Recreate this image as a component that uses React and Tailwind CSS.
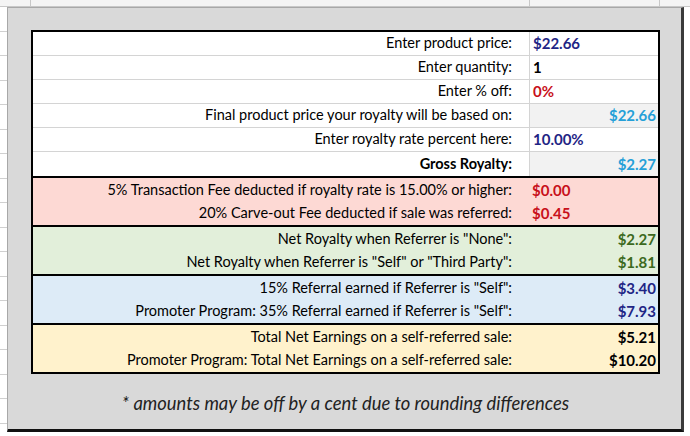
import React from 'react';

const navy = 'text-[#1f2585] font-bold';
const red = 'text-[#c8101a] font-bold';
const sky = 'text-[#25a0d8] font-bold';
const green = 'text-[#3c6a1e] font-bold';
const black = 'text-black font-bold';

const topRows = [
    { label: 'Enter product price:', value: '$22.66', tone: navy },
    { label: 'Enter quantity:', value: '1', tone: black },
    { label: 'Enter % off:', value: '0%', tone: red },
    { label: 'Final product price your royalty will be based on:', value: '$22.66', tone: sky, right: true, shade: true },
    { label: 'Enter royalty rate percent here:', value: '10.00%', tone: navy },
    { label: 'Gross Royalty:', value: '$2.27', tone: sky, right: true, shade: true, bold: true },
];

const sections = [
    {
        bg: 'bg-[#fdd9d4]',
        rows: [
            { label: '5% Transaction Fee deducted if royalty rate is 15.00% or higher:', value: '$0.00', tone: red },
            { label: '20% Carve-out Fee deducted if sale was referred:', value: '$0.45', tone: red },
        ],
    },
    {
        bg: 'bg-[#e2efda]',
        rows: [
            { label: 'Net Royalty when Referrer is "None":', value: '$2.27', tone: green, right: true },
            { label: 'Net Royalty when Referrer is "Self" or "Third Party":', value: '$1.81', tone: green, right: true },
        ],
    },
    {
        bg: 'bg-[#ddebf7]',
        rows: [
            { label: '15% Referral earned if Referrer is "Self":', value: '$3.40', tone: navy, right: true },
            { label: 'Promoter Program: 35% Referral earned if Referrer is "Self":', value: '$7.93', tone: navy, right: true },
        ],
    },
    {
        bg: 'bg-[#fff2cc]',
        rows: [
            { label: 'Total Net Earnings on a self-referred sale:', value: '$5.21', tone: black, right: true },
            { label: 'Promoter Program: Total Net Earnings on a self-referred sale:', value: '$10.20', tone: black, right: true },
        ],
    },
];

const Row = ({ row, grid, last }) => (
    <div className={`flex h-[24px] ${grid && !last ? 'border-b border-[#d4d4d4]' : ''}`}>
        <div className={`w-[496px] flex items-center justify-end pr-[17px] ${row.bold ? 'font-bold' : ''}`}>
            {row.label}
        </div>
        <div
            className={`flex-1 flex items-center text-[15px] ${grid ? 'border-l border-[#d4d4d4]' : ''} ${row.shade ? 'bg-[#f2f2f2]' : ''} ${row.right ? 'justify-end pr-[2px]' : 'pl-[3px]'} ${row.tone}`}
        >
            {row.value}
        </div>
    </div>
);

export default function App() {
    const rowLines = Array.from({ length: 18 });

    return (
        <div
            className="w-[690px] h-[436px] bg-white overflow-hidden text-[14.5px] text-black leading-none"
            style={{ fontFamily: 'Lato, "Open Sans", sans-serif' }}
        >
            {/* column header strip */}
            <div className="h-[7px] flex bg-[#f4f4f4] border-b border-[#c8c8c8]">
                <div className="w-[31px] border-r border-[#c8c8c8]" />
                <div className="w-[499px] border-r border-[#c8c8c8]" />
                <div className="w-[130px] border-r border-[#c8c8c8]" />
                <div className="flex-1" />
            </div>

            <div className="flex">
                {/* row header strip */}
                <div className="w-[7px] flex flex-col">
                    {rowLines.map((_, i) => (
                        <div key={i} className="h-[24.5px] shrink-0 border-b border-[#d0d0d0]" />
                    ))}
                </div>

                {/* gray panel */}
                <div className="w-[677px] h-[425px] shrink-0 bg-[#d9d9d9] border-l border-t border-[#a8a8a8] border-r-[3px] border-r-[#3a3a3a] border-b-[3px] border-b-[#111] pl-[23px] pt-[22px]">
                    <div className="w-[629px] border-2 border-black bg-white">
                        {topRows.map((row, i) => (
                            <Row key={i} row={row} grid last={i === topRows.length - 1} />
                        ))}
                        {sections.map((s, i) => (
                            <div key={i} className={`border-t-2 border-black ${s.bg}`}>
                                {s.rows.map((row, j) => (
                                    <div key={j} className="h-[23.5px]">
                                        <Row row={{ ...row }} />
                                    </div>
                                ))}
                            </div>
                        ))}
                    </div>

                    <div className="w-[629px] mt-[17px] h-[24px] flex items-center justify-center italic text-[18.4px] text-[#222]">
                        * amounts may be off by a cent due to rounding differences
                    </div>
                </div>
            </div>
        </div>
    );
}
